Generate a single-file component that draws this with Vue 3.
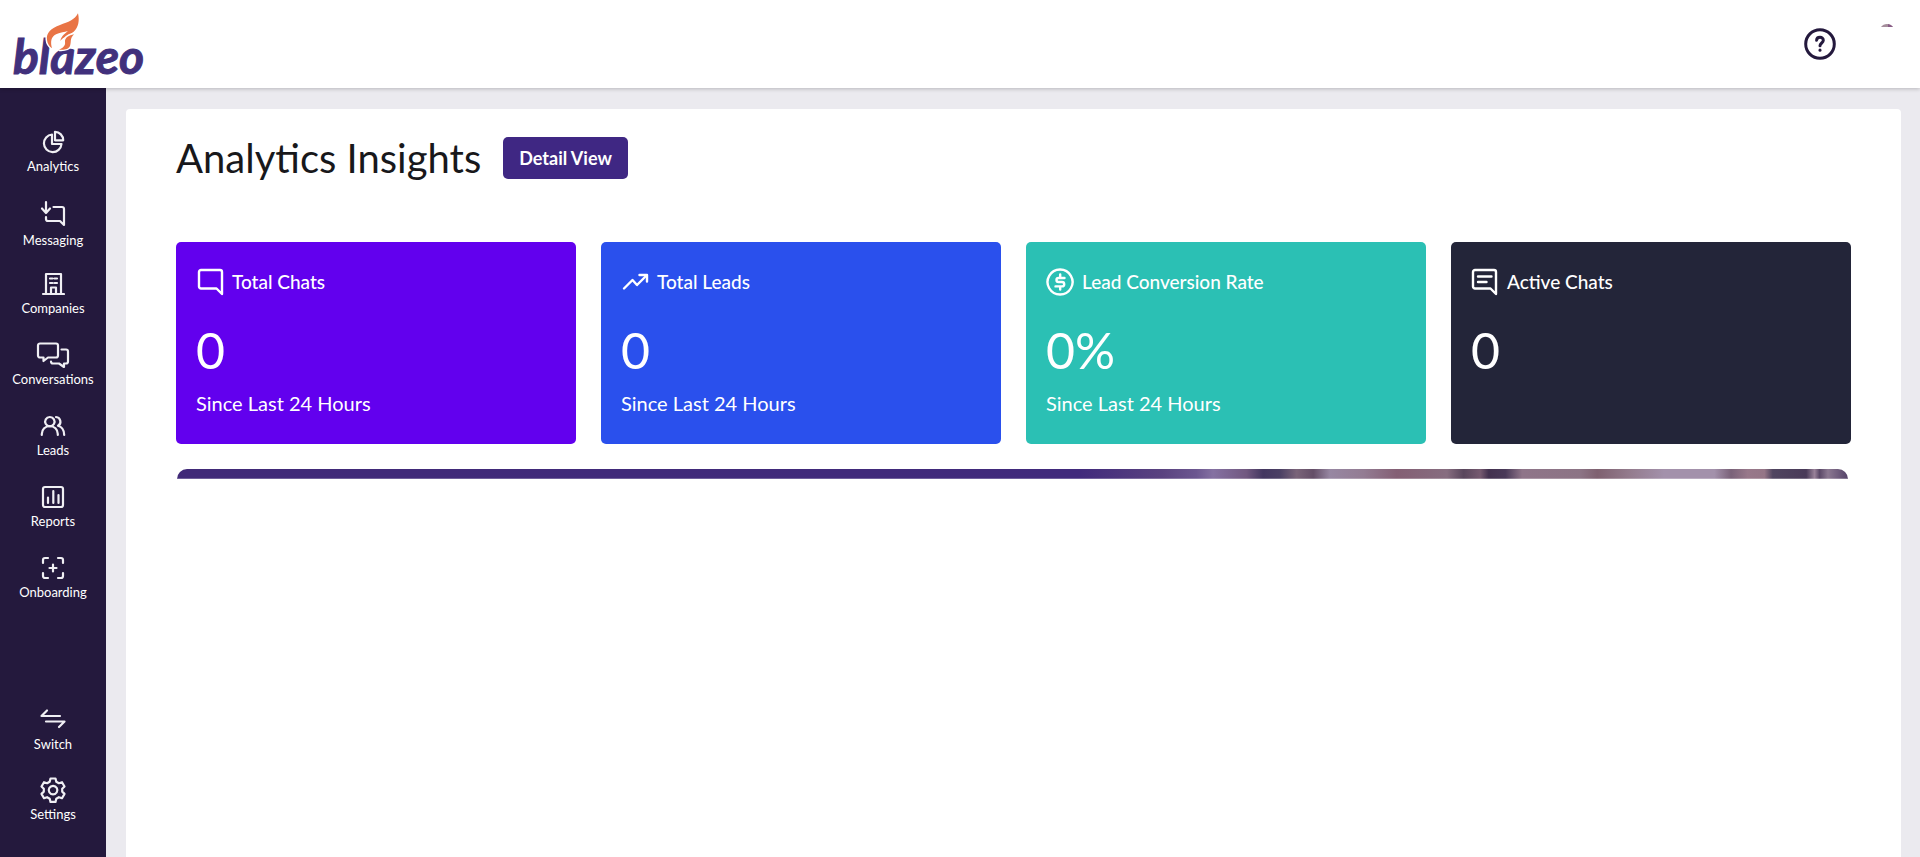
<script setup>
const mainNav = [
  { id: 'analytics', label: 'Analytics' },
  { id: 'messaging', label: 'Messaging' },
  { id: 'companies', label: 'Companies' },
  { id: 'conversations', label: 'Conversations' },
  { id: 'leads', label: 'Leads' },
  { id: 'reports', label: 'Reports' },
  { id: 'onboarding', label: 'Onboarding' },
]

const footNav = [
  { id: 'switch', label: 'Switch' },
  { id: 'settings', label: 'Settings' },
]

// Each icon is drawn at one unit per pixel.
const icons = {
  analytics: { w: 24, h: 28, d: ['M11 6.5A8.8 8.8 0 1 0 20.5 16H11Z', 'M14 3.8V12.3H22.2A8.4 8.4 0 0 0 14 3.8Z'] },
  messaging: { w: 26, h: 34, d: ['M6 6V16M2 12.5 6 17 10 12.5', 'M13.5 11H22a2 2 0 0 1 2 2V29L20 25H8a2 2 0 0 1-2-2V21'] },
  companies: { w: 24, h: 28, d: ['M2 24H23M5 24V4H20V24M10 24V17.5H15V24', 'M9 8.5H11.5M13.5 8.5H16M9 13H11.5M13.5 13H16'] },
  conversations: { w: 34, h: 28, d: ['M4 2.5H20a2 2 0 0 1 2 2V14.5a2 2 0 0 1-2 2H12L7.5 20V16.5H4a2 2 0 0 1-2-2V4.5a2 2 0 0 1 2-2Z', 'M25.5 8.5H30a2 2 0 0 1 2 2V20.5a2 2 0 0 1-2 2H28V26L23 22.5H17a2 2 0 0 1-2-2'] },
  leads: { w: 26, h: 28, d: ['M1.8 23V22a8 8 0 0 1 16 0V23', 'M9.8 5a4.7 4.7 0 1 0 .1 0Z', 'M16 5a4.7 4.7 0 0 1 2 8.8C22 15 24.2 18.5 24.2 23'] },
  reports: { w: 24, h: 28, d: ['M4 4H20a2 2 0 0 1 2 2V22a2 2 0 0 1-2 2H4a2 2 0 0 1-2-2V6a2 2 0 0 1 2-2Z', 'M7 14.5V20M12.3 8V20M17.5 12V20'] },
  onboarding: { w: 24, h: 28, d: ['M2 9V6a2 2 0 0 1 2-2H7M17 4H20a2 2 0 0 1 2 2V9M22 19V22a2 2 0 0 1-2 2H17M7 24H4a2 2 0 0 1-2-2V19', 'M12 10.5V17.5M8.5 14H15.5'] },
  switch: { w: 28, h: 30, d: ['M21 12H2.5L8 6.5', 'M7 17.5H25.5L20 23'] },
  settings: { w: 28, h: 28, d: ['M11.5 2.5h5l.8 3.2 2.6 1.5 3.1-1 2.5 4.3-2.3 2.3v2.8l2.3 2.3-2.5 4.3-3.1-1-2.6 1.5-.8 3.2h-5l-.8-3.2-2.6-1.5-3.1 1-2.5-4.3 2.3-2.3v-2.8l-2.3-2.3 2.5-4.3 3.1 1 2.6-1.5Z', 'M14 9.8a4.3 4.3 0 1 0 .1 0Z'] },
  chat: { w: 28, h: 28, d: ['M5 2H24a2 2 0 0 1 2 2V26L20.5 20.5H5a2 2 0 0 1-2-2V4a2 2 0 0 1 2-2Z'] },
  trend: { w: 28, h: 28, d: ['M3 20.5 11.5 12 16 17 25.5 7.5', 'M18.5 7H26V13.5'] },
  dollar: { w: 28, h: 28, d: ['M14 1.5A12.5 12.5 0 1 0 14.1 1.5Z', 'M18.5 10H12.5a2 2 0 0 0 0 4H16a2.2 2.2 0 0 1 0 4.4H9.5M14.2 6.5V10M14.2 18.5V21.5'] },
  message: { w: 28, h: 28, d: ['M4 2H23a2 2 0 0 1 2 2V26L19.5 20.5H4a2 2 0 0 1-2-2V4a2 2 0 0 1 2-2Z', 'M7 8.5H20.5M7 14H15.5'] },
}

const cards = [
  { id: 'chats', icon: 'chat', title: 'Total Chats', value: '0', note: 'Since Last 24 Hours' },
  { id: 'totals', icon: 'trend', title: 'Total Leads', value: '0', note: 'Since Last 24 Hours' },
  { id: 'rate', icon: 'dollar', title: 'Lead Conversion Rate', value: '0%', note: 'Since Last 24 Hours' },
  { id: 'active', icon: 'message', title: 'Active Chats', value: '0', note: '' },
]
</script>

<template>
  <div class="app">
    <header class="header">
      <a class="logo" href="#" aria-label="blazeo">
        <svg width="150" height="88" viewBox="0 0 150 88">
          <text class="wordmark" x="13" y="74">blazeo</text>
          <g transform="scale(.33333)">
            <path class="flame" d="M234 40C224 60 205 66 180 75C153 85 138 99 141 119C142 131 148 139 156 145C151 127 152 109 170 102C182 96 193 97 204 93C197 100 184 106 181 123C190 110 206 106 221 95C236 83 239 61 234 40Z" />
            <path class="flame" d="M222 103C207 106 194 113 195 125C197 137 189 144 177 149C193 150 205 149 210 138C215 124 208 118 222 103Z" />
          </g>
        </svg>
      </a>
      <div class="tools">
        <button class="help" type="button" aria-label="Help">
          <svg width="32" height="32" viewBox="0 0 32 32">
            <circle cx="16" cy="16" r="14.3" />
            <path d="M12.6 12.3C12.8 8.2 19.5 8.4 19.3 12.4C19.2 15 16 15 16 17.8" />
            <path d="M16 22V22.3" />
          </svg>
        </button>
        <div class="profile">
          <svg width="12" height="3" viewBox="0 0 12 3">
            <path d="M0 3A7.5 7.5 0 0 1 12 3Z" fill="#a58e9c" />
            <path d="M7 0Q10 .5 12 3H7Z" fill="#895c87" />
          </svg>
        </div>
      </div>
    </header>

    <div class="body">
      <nav class="sidebar" aria-label="Main">
        <a v-for="item in mainNav" :key="item.id" class="item" href="#">
          <svg class="icon" :width="icons[item.id].w" :height="icons[item.id].h">
            <path v-for="d in icons[item.id].d" :key="d" :d="d" />
          </svg>
          <span>{{ item.label }}</span>
        </a>
        <div class="foot">
          <a v-for="item in footNav" :key="item.id" class="item" href="#">
            <svg class="icon" :width="icons[item.id].w" :height="icons[item.id].h">
              <path v-for="d in icons[item.id].d" :key="d" :d="d" />
            </svg>
            <span>{{ item.label }}</span>
          </a>
        </div>
      </nav>

      <main class="content">
        <section class="panel">
          <div class="heading">
            <h1>Analytics Insights</h1>
            <button class="detail" type="button">Detail View</button>
          </div>
          <div class="cards">
            <article v-for="card in cards" :key="card.id" class="card" :class="card.id">
              <h2>
                <svg class="icon" :width="icons[card.icon].w" :height="icons[card.icon].h">
                  <path v-for="d in icons[card.icon].d" :key="d" :d="d" />
                </svg>
                {{ card.title }}
              </h2>
              <p class="value">{{ card.value }}</p>
              <p v-if="card.note" class="note">{{ card.note }}</p>
            </article>
          </div>
          <div class="banner"></div>
        </section>
      </main>
    </div>
  </div>
</template>

<style>
body {
  margin: 0;
  background: #ebeaef;
}
</style>

<style scoped>
.app {
  display: flex;
  flex-direction: column;
  height: 100vh;
  overflow: hidden;
  font-family: Lato, 'Liberation Sans', sans-serif;
}
.header {
  position: relative;
  z-index: 1;
  display: flex;
  flex: none;
  align-items: center;
  justify-content: space-between;
  height: 88px;
  background: #fff;
  box-shadow: 0 1px 4px rgba(0, 0, 0, 0.22);
}
.logo,
.logo svg {
  display: block;
}
.wordmark {
  font: italic 700 48px Lato, sans-serif;
  fill: #41307c;
  stroke: #41307c;
  stroke-width: 1px;
}
.flame {
  fill: #e97445;
  stroke: #fff;
  stroke-width: 9px;
  paint-order: stroke;
}
.tools {
  display: flex;
  align-items: center;
  gap: 45px;
  padding-right: 27px;
}
.help {
  display: block;
  padding: 0;
  border: 0;
  background: none;
}
.help svg,
.profile svg {
  display: block;
}
.help svg {
  fill: none;
  stroke: #24193d;
  stroke-width: 3px;
  stroke-linecap: round;
}
.profile {
  height: 40px;
}
.body {
  display: flex;
  flex: 1;
  min-height: 0;
}
.sidebar {
  display: flex;
  flex: none;
  flex-direction: column;
  box-sizing: border-box;
  width: 106px;
  padding: 28px 0 22px;
  background: #24193d;
}
.item {
  display: flex;
  flex-direction: column;
  align-items: center;
  justify-content: center;
  height: 71px;
  color: #fff;
  font-size: 13px;
  line-height: 20px;
  text-decoration: none;
}
.foot {
  margin-top: auto;
}
.icon {
  display: block;
  flex: none;
  fill: none;
  stroke: currentColor;
  stroke-width: 2.4px;
  stroke-linecap: round;
  stroke-linejoin: round;
}
.item .icon {
  color: #f0eff4;
  stroke-width: 2.2px;
}
.content {
  display: flex;
  flex: 1;
  padding: 21px 19px 0 20px;
  background: #ebeaef;
}
.panel {
  flex: 1;
  padding: 28px 50px 0;
  border-radius: 4px 4px 0 0;
  background: #fff;
}
.heading {
  display: flex;
  align-items: center;
  gap: 22px;
  margin-bottom: 63px;
}
h1 {
  margin: 0;
  color: #18181b;
  font-size: 40px;
  font-weight: 400;
  line-height: 42px;
}
.detail {
  height: 42px;
  padding: 0 16px;
  border: 0;
  border-radius: 5px;
  background: #3f2783;
  color: #fff;
  font: 700 18px Lato, sans-serif;
}
.cards {
  display: grid;
  grid-template-columns: repeat(4, 1fr);
  gap: 25px;
}
.card {
  box-sizing: border-box;
  min-height: 202px;
  padding: 26px 20px;
  border-radius: 5px;
  color: #fff;
}
.chats {
  background: #6200ee;
}
.totals {
  background: #2a50ed;
}
.rate {
  background: #2bc0b4;
}
.active {
  background: #232539;
}
h2 {
  display: flex;
  align-items: center;
  gap: 8px;
  margin: 0;
  font-size: 19px;
  font-weight: 500;
  line-height: 28px;
}
.value {
  margin: 24px 0 9px;
  font-size: 50px;
  line-height: 60px;
}
.note {
  margin: 0;
  font-size: 20px;
  line-height: 28px;
}
.banner {
  height: 10px;
  margin: 25px 3px 0 1px;
  border-radius: 12px 12px 0 0;
  box-shadow: inset 0 -1px rgba(255, 255, 255, 0.25);
  background: linear-gradient(90deg, #412a78 0, #412a7c 54%, #5a4380 59%, #6c5790 61%, #8571a2 62%, #715880 64%, #433760 65%, #4b4064 66%, #7a6479 67%, #644e67 68%, #9787a2 69%, #937c93 71%, #845f74 73%, #876d80 76%, #59465c 77%, #765a70 78%, #43314f 78.5%, #493958 79.5%, #8f7589 80.5%, #8c7485 84%, #7f6170 85%, #947c8e 87%, #a391ab 89%, #a391ab 92%, #7a6279 93%, #98788a 94%, #957687 95%, #504560 95.5%, #493a58 97.5%, #998299 98%, #5a4867 98.3%, #8b7891 98.8%, #554369 100%);
}
</style>
